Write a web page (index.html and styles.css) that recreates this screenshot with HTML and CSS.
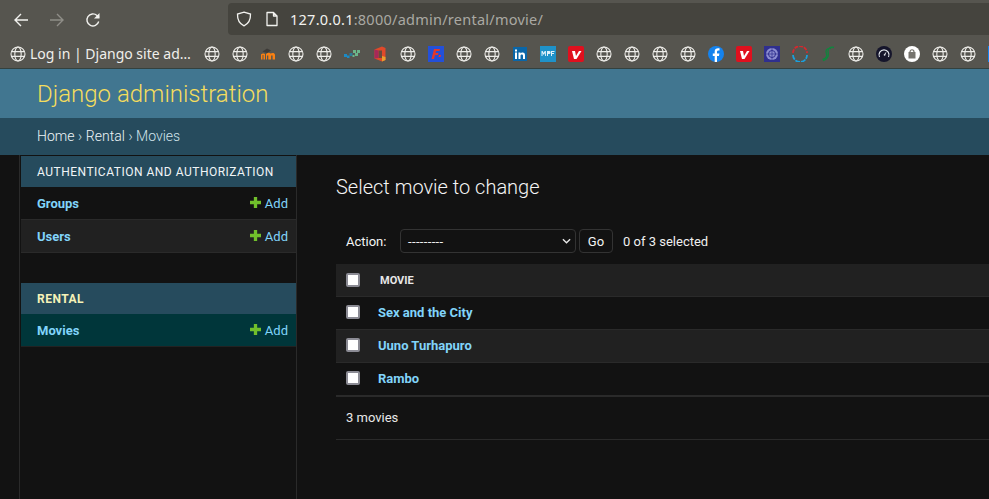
FILE: index.html
```html
<!DOCTYPE html>
<html lang="en">
<head>
<meta charset="utf-8">
<title>Select movie to change</title>
<link rel="stylesheet" href="styles.css">
</head>
<body>
<svg class="defs" width="0" height="0">
  <symbol id="globe" viewBox="0 0 16 16"><g fill="none" stroke="currentColor" stroke-width="1.1"><circle cx="8" cy="8" r="7"/><ellipse cx="8" cy="8" rx="3.2" ry="7"/><path d="M1.5 5.6h13M1.5 10.4h13"/></g></symbol>
  <symbol id="plus" viewBox="0 0 10 10"><path fill="#70bf2b" d="M3.5 0h3v3.5H10v3H6.500V10h-3V6.500H0v-3h3.500z"/></symbol>
</svg>
<div class="browser">
  <div class="toolbar">
    <div class="nav">
      <svg class="navicon" viewBox="0 0 16 16"><path d="M15 8H2M8 2 2 8l6 6" fill="none" stroke="#f2f2ef" stroke-width="1.400"/></svg>
      <svg class="navicon" viewBox="0 0 16 16"><path d="M1 8h13M8 2l6 6-6 6" fill="none" stroke="#8f8e88" stroke-width="1.400"/></svg>
      <svg class="navicon" viewBox="0 0 16 16"><path d="M13.700 9.500A6 6 0 1 1 12 3.500L14 5.500" fill="none" stroke="#f2f2ef" stroke-width="1.400"/><path d="M14.500 1v5.500H9z" fill="#f2f2ef"/></svg>
    </div>
    <div class="urlbar">
      <svg class="urlicon" viewBox="0 0 16 16"><path d="M8 1.200 14.500 3c.2 5.500-1.500 9.500-6.500 11.800C3 12.500 1.300 8.500 1.500 3z" fill="none" stroke="#f2f2ef" stroke-width="1.300"/></svg>
      <svg class="urlicon" viewBox="0 0 16 16"><path d="M3 1.500h6.500L13 5v9.500H3zM9.500 1.500V5H13" fill="none" stroke="#f2f2ef" stroke-width="1.300" stroke-linejoin="round"/></svg>
      <span class="url"><span class="host">127.0.0.1</span>:8000/admin/rental/movie/</span>
    </div>
  </div>
  <div class="bookmarks">
    <div class="bm-first"><svg class="globe"><use href="#globe"/></svg><span>Log in | Django site ad…</span></div>
    <svg class="globe"><use href="#globe"/></svg>
    <svg class="globe"><use href="#globe"/></svg>
    <svg class="fav" viewBox="0 0 16 16"><path d="M1 13.500V8.500c1-1 3-1.500 4-.5v5.500H3.500V9H2.500v4.500zM6 8c2-1.500 3.500-1.500 4.500-.5 1.500-1 4.500-1 4.500 1.500v4.500h-2.400V9.500h-1.500v4H8.300V9.500H7v4H6z" fill="#f98012"/><path d="M2.500 5.500 7 2.500l4 2-4 2.500z" fill="#3d3b38"/></svg>
    <svg class="globe"><use href="#globe"/></svg>
    <svg class="globe"><use href="#globe"/></svg>
    <svg class="fav" viewBox="0 0 16 16"><path d="M0 8h3v3H0zM3 9.500h2.500V12H3z" fill="#1c8ac4"/><path d="M5.500 7h3v3h-3z" fill="#2d7d9a"/><path d="M9 4h3v3H9zM13 4h3v3h-3zM11 7h3v3h-3zM8.500 9h2v2h-2z" fill="#6bb58a"/></svg>
    <svg class="fav" viewBox="0 0 16 16"><path d="M2.500 3.500 10 .5l3.500 1.500v12L10 15.500l-7.500-3z" fill="#e0492a"/><path d="M6.500 4.500h3.500v7.500H6.500z" fill="#6a4a3c"/><path d="M2.500 3.500l4 1v7.500l-4 .5z" fill="#a6285a"/><path d="M10 10l3.500 1v3L10 15.500z" fill="#e9a02c"/></svg>
    <svg class="globe"><use href="#globe"/></svg>
    <svg class="fav" viewBox="0 0 16 16"><rect width="16" height="16" fill="#2450d8"/><path d="M6 3h6l-.6 2H8l-.5 2h3l-.5 2H7l-1 4H3.500z" fill="#e5372b"/><path d="M11 9h2l-.5 2h-2z" fill="#e5372b"/></svg>
    <svg class="globe"><use href="#globe"/></svg>
    <svg class="globe"><use href="#globe"/></svg>
    <svg class="fav" viewBox="0 0 16 16"><rect x="1" y="1" width="14" height="14" fill="#0a66a8"/><path d="M3 6.500h2V13H3zM3 3.500h2v2H3zM6.500 6.500h2v1c1-1.500 4.500-1.700 4.500 1.500V13h-2V9.500c0-1.500-2.500-1.500-2.500 0V13h-2z" fill="#fff"/></svg>
    <svg class="fav" viewBox="0 0 16 16"><rect width="16" height="16" fill="#1f92c9"/><path d="M1.500 10V5h1.200l1 2 1-2h1.200v5H5V7L3.700 9 2.500 7v3zM7 5h2.500c1.500 0 1.500 3 0 3H8v2H7zM11 5h3.500v1H12v1h2v1h-2v2h-1z" fill="#dff1fa"/></svg>
    <svg class="fav" viewBox="0 0 16 16"><rect width="16" height="16" rx="2" fill="#e0101e"/><path d="M4 5h3l1 5 3-5h2.500l-5 8H6z" fill="#fff"/></svg>
    <svg class="globe"><use href="#globe"/></svg>
    <svg class="globe"><use href="#globe"/></svg>
    <svg class="globe"><use href="#globe"/></svg>
    <svg class="globe"><use href="#globe"/></svg>
    <svg class="fav" viewBox="0 0 16 16"><circle cx="8" cy="8" r="8" fill="#1583ee"/><path d="M9 16v-6h2l.4-2.500H9V6c0-1 .4-1.500 1.500-1.500h1V2.300C9 1.800 6.700 2.500 6.700 5.500v2H4.800V10h1.900v6z" fill="#fff"/></svg>
    <svg class="fav" viewBox="0 0 16 16"><rect width="16" height="16" rx="2" fill="#e0101e"/><path d="M4 5h3l1 5 3-5h2.500l-5 8H6z" fill="#fff"/></svg>
    <svg class="fav" viewBox="0 0 16 16"><rect width="16" height="16" fill="#2f2f8f"/><circle cx="8" cy="8" r="6" fill="#8d8ed0"/><circle cx="8" cy="8" r="3.500" fill="none" stroke="#2f2f8f"/><path d="M8 2v12M2 8h12" stroke="#2f2f8f" stroke-width=".7"/></svg>
    <svg class="fav" viewBox="0 0 16 16"><path d="M1 7a7 7 0 0 1 14 0" fill="none" stroke="#d3292f" stroke-width="1.800" stroke-dasharray="4 1"/><path d="M1 9a7 7 0 0 0 14 0" fill="none" stroke="#1ba0dd" stroke-width="1.800" stroke-dasharray="5 1"/></svg>
    <svg class="fav" viewBox="0 0 16 16"><path d="M14 1.500c-4-1-6 1-6 3.500S9 8 8 10.500 5 14 3 14.500M11 2.500C8 2 6 3.500 6 5.500c0 2 1.500 3 .5 5s-2 2.500-4 3" fill="none" stroke="#12843e" stroke-width="1.300"/></svg>
    <svg class="globe"><use href="#globe"/></svg>
    <svg class="fav" viewBox="0 0 16 16"><circle cx="8" cy="8" r="8" fill="#15152b"/><path d="M3.500 11a5 5 0 1 1 9 0" fill="none" stroke="#dfe3ea" stroke-width="1.200"/><path d="M7.500 9l3-3.500-1.500 4.500z" fill="#dfe3ea"/></svg>
    <svg class="fav" viewBox="0 0 16 16"><circle cx="8" cy="8" r="8" fill="#fff"/><path d="M6 6c0-3 4-3 4 0" fill="none" stroke="#77756f" stroke-width="1.200"/><path d="M4.500 6h7v6.500h-7z" fill="#77756f"/></svg>
    <svg class="globe"><use href="#globe"/></svg>
    <svg class="globe"><use href="#globe"/></svg>
    <svg class="fav" viewBox="0 0 16 16"><rect width="16" height="16" fill="#1583ee"/></svg>
  </div>
</div>
<header class="site-header"><h1 class="brand">Django administration</h1></header>
<nav class="crumbs"><a>Home</a> › <a>Rental</a> › Movies</nav>
<div class="main">
  <aside class="sidebar">
    <section class="app">
      <h2 class="caption">AUTHENTICATION AND AUTHORIZATION</h2>
      <div class="row"><a class="model">Groups</a><a class="add"><svg class="plus"><use href="#plus"/></svg>Add</a></div>
      <div class="row alt"><a class="model">Users</a><a class="add"><svg class="plus"><use href="#plus"/></svg>Add</a></div>
    </section>
    <section class="app">
      <h2 class="caption current">RENTAL</h2>
      <div class="row selected"><a class="model">Movies</a><a class="add"><svg class="plus"><use href="#plus"/></svg>Add</a></div>
    </section>
  </aside>
  <main class="content">
    <h1 class="title">Select movie to change</h1>
    <div class="actions">
      <span class="action-label">Action:</span>
      <div class="select"><span class="dashes">---------</span><svg class="chev" viewBox="0 0 10 6"><path d="M1 1l4 4 4-4" fill="none" stroke="#e8e8e8" stroke-width="1.500"/></svg></div>
      <div class="go">Go</div>
      <span class="count">0 of 3 selected</span>
    </div>
    <div class="thead"><span class="check"></span><span class="th">MOVIE</span></div>
    <div class="tr"><span class="check"></span><a class="movie">Sex and the City</a></div>
    <div class="tr alt"><span class="check"></span><a class="movie">Uuno Turhapuro</a></div>
    <div class="tr last"><span class="check"></span><a class="movie">Rambo</a></div>
    <p class="paginator">3 movies</p>
  </main>
</div>
</body>
</html>
```
FILE: styles.css
```css
* { box-sizing: border-box; }
html, body { margin: 0; height: 100%; overflow: hidden; }
body { background: #121212; font-family: Roboto, "Liberation Sans", sans-serif; color: #eee; width: 989px; height: 499px; }
.defs { position: absolute; }
.browser { height: 69px; background: #56554f; border-bottom: 1px solid #33413f; overflow: hidden; }
.toolbar { height: 37px; display: flex; padding: 3px 0 0 13px; }
.nav { display: flex; gap: 20px; width: 215px; padding-top: 9px; height: 32px; }
.navicon { width: 16px; height: 16px; }
.urlbar { flex: 1; height: 32px; background: #45443e; border-radius: 4px 0 0 4px; display: flex; align-items: center; padding-left: 8px; gap: 12px; font-family: "Noto Sans", "Open Sans", sans-serif; }
.urlicon { width: 16px; height: 16px; flex: none; }
.url { font-size: 14.500px; color: #aaa9a3; margin-left: -2px; letter-spacing: .25px; }
.host { color: #f2f2ef; }
.bookmarks { height: 31px; display: flex; align-items: center; gap: 12px; padding: 2px 0 0 10px; font-family: "Noto Sans", "Open Sans", sans-serif; color: #f0efeb; }
.bm-first { width: 182px; flex: none; display: flex; align-items: center; gap: 4px; font-size: 14px; white-space: nowrap; }
.globe, .fav { width: 16px; height: 16px; flex: none; }
.globe { color: #eeede9; }
.site-header { height: 49px; background: #417690; padding: 0 37px; display: flex; align-items: center; }
.brand { margin: 0; font-size: 24px; font-weight: 300; color: #f5dd5d; }
.crumbs { height: 37px; background: #264b5d; padding: 0 37px 2px; display: flex; align-items: center; gap: .26em; font-size: 14px; font-weight: 300; color: #d2e4ec; }
.crumbs a { color: #eef5f8; }
.main { display: flex; height: 344px; }
.sidebar { width: 278px; margin-left: 19px; padding: 1px 0 0 1px; border-left: 1px solid #2a2a2a; border-right: 1px solid #2a2a2a; flex: none; }
.app { margin-bottom: 30px; }
.caption { margin: 0; height: 31px; background: #264b5d; padding: 0 16px; display: flex; align-items: center; font-size: 12px; font-weight: 400; letter-spacing: .5px; color: #f0f5f7; white-space: nowrap; }
.caption.current { font-weight: 700; color: #f5f2b8; }
.row { height: 33px; display: flex; align-items: center; justify-content: space-between; padding: 0 8px 0 16px; border-bottom: 1px solid #2a2a2a; font-size: 13px; background: #121212; }
.row.alt { background: #212121; }
.row.selected { background: #00363a; border-bottom-color: #222; }
.model { font-weight: 700; color: #81d4fa; }
.add { color: #81d4fa; display: flex; align-items: center; gap: 4px; }
.plus { width: 11px; height: 11px; margin-top: -2px; }
.content { flex: 1; padding: 20px 0 0 39px; min-width: 0; }
.title { margin: 0; font-size: 20px; font-weight: 300; line-height: 24px; color: #f5f5f5; }
.actions { display: flex; align-items: center; margin-top: 30px; height: 24px; padding-left: 10px; font-size: 13px; }
.action-label { width: 54px; color: #f5f5f5; font-weight: 400; }
.select { width: 176px; height: 24px; border: 1px solid #333; border-radius: 4px; display: flex; align-items: center; justify-content: space-between; padding: 0 4px 0 7px; color: #f0f0f0; margin-right: 3px; }
.dashes { letter-spacing: .35px; }
.chev { width: 9px; height: 6px; }
.go { width: 34px; height: 24px; border: 1px solid #333; border-radius: 4px; display: flex; align-items: center; justify-content: center; color: #f5f5f5; margin-right: 10px; }
.count { color: #f0f0f0; }
.thead { height: 33px; margin-top: 11px; background: #212121; border-bottom: 1px solid #2a2a2a; display: flex; align-items: center; padding-left: 10px; }
.th { font-size: 11px; font-weight: 700; color: #e8e8e8; margin-left: 20px; }
.check { width: 14px; height: 14px; flex: none; background: #fff; border: 2px solid #8b8b94; border-radius: 2px; }
.tr { height: 33px; display: flex; align-items: center; padding: 0 0 1px 10px; border-bottom: 1px solid #2a2a2a; font-size: 13px; }
.tr .check { margin-top: -2px; }
.tr.alt { background: #212121; }
.tr.last { height: 34px; border-bottom: 2px solid #2a2a2a; }
.movie { font-weight: 700; color: #81d4fa; margin-left: 18px; }
.paginator { margin: 0; height: 43px; display: flex; align-items: center; padding: 0 0 2px 10px; font-size: 13px; color: #e8e8e8; border-bottom: 1px solid #2a2a2a; }
```
